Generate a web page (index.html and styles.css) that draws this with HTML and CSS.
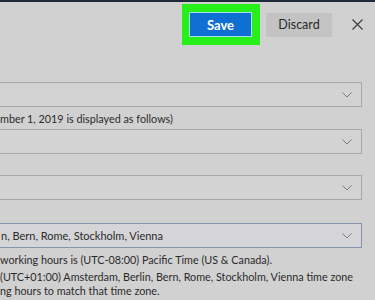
FILE: index.html
```html
<!DOCTYPE html>
<html lang="en">
<head>
<meta charset="utf-8">
<title>Settings</title>
<link rel="stylesheet" href="styles.css">
</head>
<body>
<div class="strip"></div>
<header class="header">
  <div class="highlight">
    <button class="btn btn-save">Save</button>
  </div>
  <button class="btn btn-discard">Discard</button>
  <button class="close" aria-label="Close">
    <svg width="11" height="11" viewBox="0 0 11 11"><path d="M0.5 0.5 L10.5 10.5 M10.5 0.5 L0.5 10.5" stroke="#3a3a3a" stroke-width="1.1" fill="none"/></svg>
  </button>
</header>
<main class="form">
  <div class="select s1"><span class="val"></span><svg class="chev" width="10" height="6" viewBox="0 0 10 6"><path d="M0.5 0.5 L5 5 L9.5 0.5" stroke="#7b7b7b" stroke-width="1" fill="none"/></svg></div>
  <p class="caption">mber 1, 2019 is displayed as follows)</p>
  <div class="select s2"><span class="val"></span><svg class="chev" width="10" height="6" viewBox="0 0 10 6"><path d="M0.5 0.5 L5 5 L9.5 0.5" stroke="#7b7b7b" stroke-width="1" fill="none"/></svg></div>
  <div class="select s3"><span class="val"></span><svg class="chev" width="10" height="6" viewBox="0 0 10 6"><path d="M0.5 0.5 L5 5 L9.5 0.5" stroke="#7b7b7b" stroke-width="1" fill="none"/></svg></div>
  <div class="select s4 focused"><span class="val">n, Bern, Rome, Stockholm, Vienna</span><svg class="chev" width="10" height="6" viewBox="0 0 10 6"><path d="M0.5 0.5 L5 5 L9.5 0.5" stroke="#7b7b7b" stroke-width="1" fill="none"/></svg></div>
  <p class="note">working hours is (UTC-08:00) Pacific Time (US &amp; Canada).</p>
  <p class="note note2">(UTC+01:00) Amsterdam, Berlin, Bern, Rome, Stockholm, Vienna time zone<br>ng hours to match that time zone.</p>
</main>
</body>
</html>
```
FILE: styles.css
```css
* { box-sizing: border-box; }
html, body { margin: 0; padding: 0; }
body {
  background: #d1d1d1;
  font-family: "Segoe UI", Lato, "Noto Sans", sans-serif;
  color: #2b2b2b;
  width: 375px;
  height: 300px;
  overflow: hidden;
}
.strip { height: 2px; background: #1e2a3a; }
.header {
  display: flex;
  justify-content: flex-end;
  align-items: center;
  padding: 2px 12px 0 0;
}
.highlight {
  background: #27ef1a;
  width: 78px;
  height: 41px;
  padding: 8px 8px 8px 7px;
  display: flex;
}
.btn {
  border: none;
  font-family: inherit;
  font-size: 12.5px;
  padding: 0;
  cursor: pointer;
}
.btn-save {
  flex: 1;
  background: #106fd2;
  color: #fff;
  font-weight: 700;
  font-size: 13px;
  border: 1px solid #a9dde9;
}
.btn-discard {
  margin-left: 6px;
  width: 66px;
  height: 24px;
  background: #c3c3c3;
  color: #2a2a2a;
}
.close {
  margin-left: 20px;
  width: 11px;
  height: 11px;
  padding: 0;
  border: none;
  background: none;
  display: flex;
}
.form {
  margin-top: 37px;
  display: flex;
  flex-direction: column;
}
.select {
  margin-left: -10px;
  width: 372px;
  height: 25px;
  border: 1px solid #a8a8a8;
  background: #d3d3d3;
  display: flex;
  align-items: center;
  justify-content: space-between;
  padding: 0 9px 0 10px;
  font-size: 11px;
}
.select .chev { flex: none; margin-top: 1px; }
.focused { border-color: #8593ad; background: #d5d5d8; }
.caption {
  margin: 4px 0 2px;
  font-size: 10.8px;
  line-height: 16px;
  white-space: nowrap;
}
.s3 { margin-top: 21px; }
.s4 { margin-top: 23px; }
.note {
  margin: 4px 0 0;
  font-size: 10.8px;
  line-height: 15px;
  white-space: nowrap;
}
.note2 { margin-top: 3px; line-height: 14px; }
```
